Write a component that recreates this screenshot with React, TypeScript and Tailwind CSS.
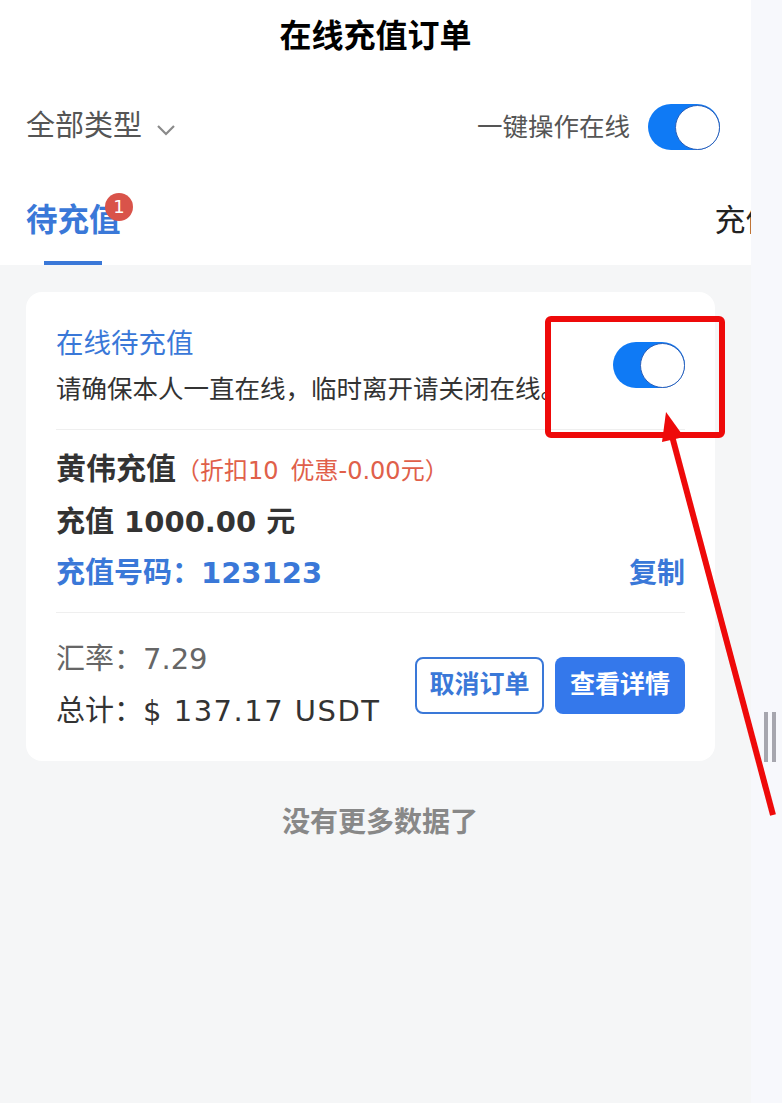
import React from "react";

function Toggle() {
  return (
    <div className="w-[72px] h-[46px] rounded-full bg-[#0f7af5] flex items-center justify-end shrink-0">
      <div className="w-[45px] h-[45px] rounded-full bg-white border-[1.5px] border-[#2b5fb8]" />
    </div>
  );
}

export default function App() {
  return (
    <div className="relative flex w-[782px] h-[1103px] overflow-hidden font-['DejaVu_Sans','Noto_Sans_CJK_SC',sans-serif]">
      {/* page column */}
      <div className="w-[751px] shrink-0 flex flex-col bg-[#f5f6f7]">
        <div className="bg-white">
          <div className="h-[72px] flex items-center justify-center text-[32px] font-bold text-black">
            在线充值订单
          </div>

          <div className="h-[110px] flex items-center justify-between pl-[26px] pr-[31px]">
            <div className="flex items-center gap-[14px] text-[29px] text-[#555]">
              <span>全部类型</span>
              <svg width="20" height="14" viewBox="0 0 20 14" className="mt-[6px]">
                <polyline points="2,3 10,11 18,3" fill="none" stroke="#8a8a8a" strokeWidth="2.2" />
              </svg>
            </div>
            <div className="flex items-center gap-[18px]">
              <span className="text-[25.5px] text-[#555]">一键操作在线</span>
              <Toggle />
            </div>
          </div>

          {/* tabs */}
          <div className="h-[83px] flex overflow-hidden pl-[26px]">
            <div className="flex flex-col items-center pt-[18px] shrink-0">
              <div className="relative h-[40px] leading-[40px] text-[31.5px] font-bold text-[#3a78d8]">
                待充值
                <span className="absolute left-[79px] top-[-7px] w-[28px] h-[28px] rounded-full bg-[#d9534a] text-white text-[18px] font-normal leading-[28px] text-center">
                  1
                </span>
              </div>
              <div className="mt-[21px] w-[58px] h-[4px] bg-[#3a78d8]" />
            </div>
            <div className="ml-[594px] pt-[18px] shrink-0 h-[40px] leading-[40px] text-[31px] text-[#222] whitespace-nowrap box-content">
              充值成功
            </div>
          </div>
        </div>

        <div className="pl-[26px] pt-[27px] flex flex-col">
          {/* order card */}
          <div className="w-[689px] rounded-[16px] bg-white px-[30px]">
            <div className="flex items-center justify-between pt-[30px] pb-[21px] border-b border-[#efefef]">
              <div>
                <div className="leading-[43px] text-[27.5px] text-[#3a78d8]">在线待充值</div>
                <div className="leading-[43px] text-[25.5px] text-[#333] font-['Noto_Sans_CJK_SC',sans-serif]">
                  请确保本人一直在线，临时离开请关闭在线。
                </div>
              </div>
              <Toggle />
            </div>

            <div className="pt-[13px] pb-[13px] border-b border-[#efefef]">
              <div className="leading-[51px] flex items-baseline">
                <span className="text-[30px] font-bold text-[#333]">黄伟充值</span>
                <span className="text-[24px] text-[#e0604a]">（折扣10<span className="ml-[12px]">优惠-0.00元</span>）</span>
              </div>
              <div className="leading-[51px] text-[29px] font-bold text-[#333]">充值 1000.00 元</div>
              <div className="leading-[51px] flex justify-between text-[29px] font-bold text-[#3a78d8]">
                <span>充值号码：123123</span>
                <span className="text-[28px]">复制</span>
              </div>
            </div>

            <div className="pt-[20px] pb-[24px] flex items-center justify-between">
              <div className="text-[29px]">
                <div className="leading-[52px] text-[#666]">汇率：7.29</div>
                <div className="leading-[52px] text-[#333]">
                  总计：<span className="tracking-[1.5px]">$ 137.17 USDT</span>
                </div>
              </div>
              <div className="flex gap-[11px]">
                <div className="w-[129px] h-[57px] rounded-[8px] border-2 border-[#3a78d8] flex items-center justify-center text-[25px] font-bold text-[#3a78d8]">
                  取消订单
                </div>
                <div className="w-[130px] h-[57px] rounded-[8px] bg-[#3478eb] flex items-center justify-center text-[25px] font-bold text-white">
                  查看详情
                </div>
              </div>
            </div>
          </div>

          <div className="w-[708px] mt-[42px] leading-[40px] text-center text-[28px] font-bold text-[#888]">
            没有更多数据了
          </div>
        </div>
      </div>

      {/* side strip with scrollbar handle */}
      <div className="flex-1 bg-[#f7f8fc] pt-[712px] pl-[13px]">
        <div className="flex gap-[4px]">
          <div className="w-[4px] h-[50px] bg-[#a6a6ae]" />
          <div className="w-[4px] h-[50px] bg-[#a6a6ae]" />
        </div>
      </div>

      {/* red callout */}
      <svg className="absolute left-0 top-0 pointer-events-none" width="782" height="1103" viewBox="0 0 782 1103">
        <rect x="548" y="319" width="174" height="116" rx="3" fill="none" stroke="#ee0a0a" strokeWidth="6" />
        <line x1="672" y1="436" x2="773" y2="815" stroke="#ee0a0a" strokeWidth="6" />
        <polygon points="666,412 684,437 662,442" fill="#ee0a0a" />
      </svg>
    </div>
  );
}
